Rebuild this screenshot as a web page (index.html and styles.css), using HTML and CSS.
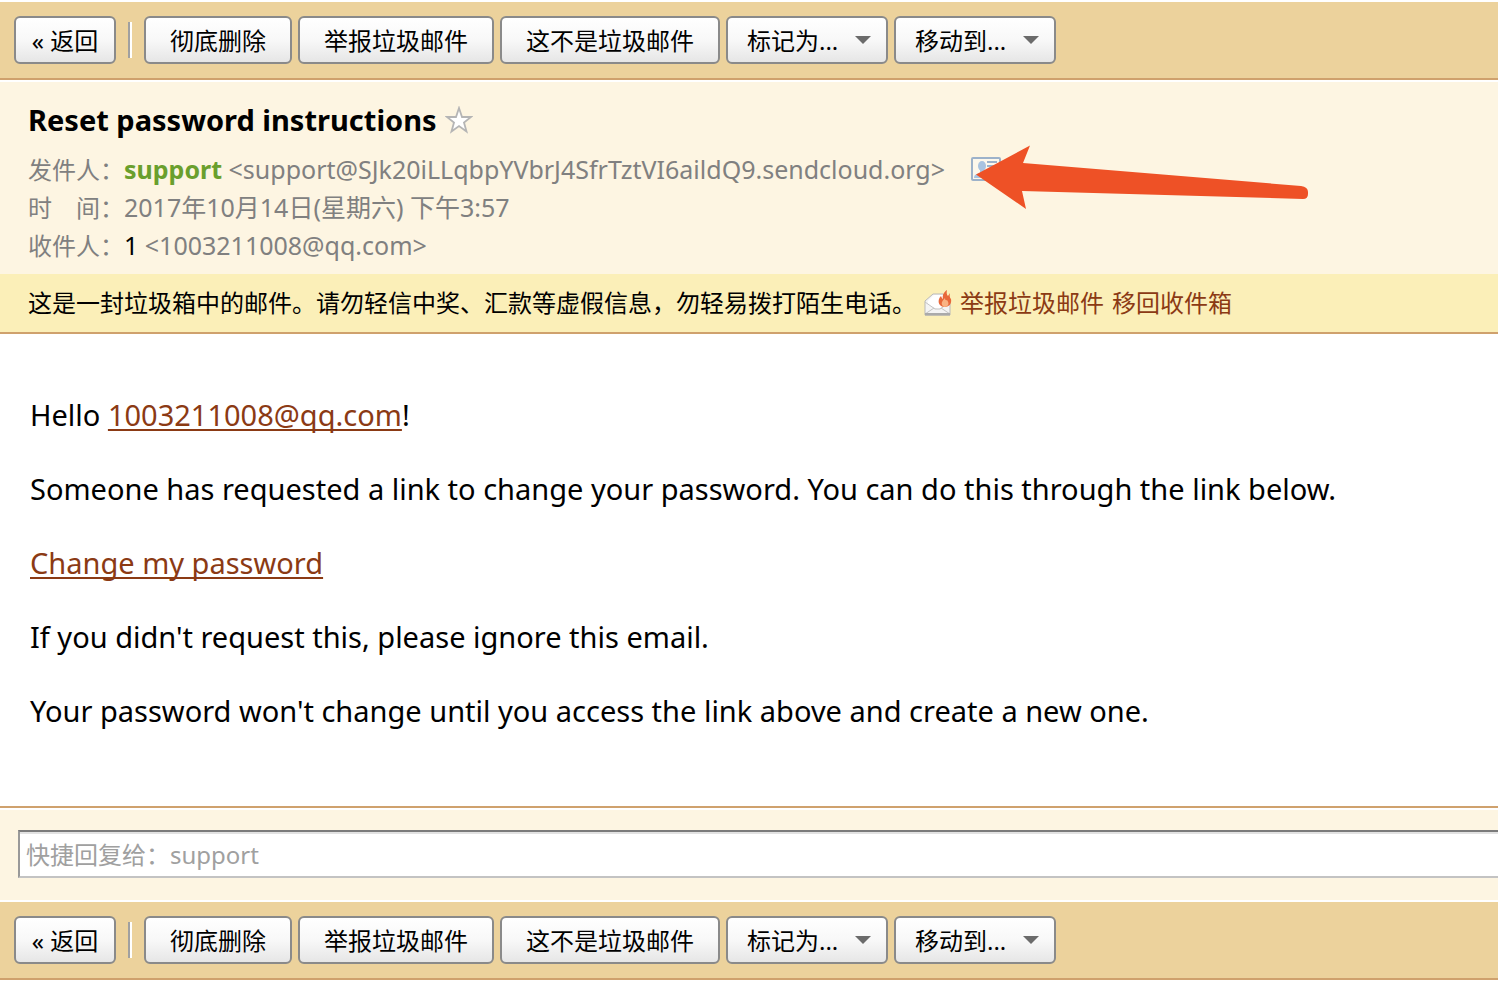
FILE: index.html
```html
<!DOCTYPE html>
<html lang="zh-CN">
<head>
    <meta charset="UTF-8">
    <title>Reset password instructions</title>
    <link rel="stylesheet" href="styles.css">
</head>
<body>
<div class="toolbar">
    <button type="button" class="btn back">« 返回</button>
    <span class="line"></span>
    <button type="button" class="btn">彻底删除</button>
    <button type="button" class="btn">举报垃圾邮件</button>
    <button type="button" class="btn">这不是垃圾邮件</button>
    <span class="drop"><select class="btn" aria-label="标记为"><option>标记为...</option></select></span>
    <span class="drop"><select class="btn" aria-label="移动到"><option>移动到...</option></select></span>
</div>

<div class="mailhead">
    <h1>Reset password instructions
        <svg class="star" viewBox="0 0 28 28"><path d="M14 2L17 11H26L19 16.500 21.500 25.500 14 20 6.500 25.500 9 16.500 2 11H11z" fill="#fff" stroke="#b5b5b5" stroke-width="1.800"/></svg>
    </h1>
    <div class="row">
        <span class="label">发件人：</span><span class="value"><b class="sender">support</b> &lt;support@SJk20iLLqbpYVbrJ4SfrTztVI6aildQ9.sendcloud.org&gt;</span>
        <span class="card">
            <svg class="cardicon" viewBox="0 0 30 24">
                <rect x="1" y="1" width="28" height="22" rx="1" fill="#fdf8ec" stroke="#9db2ca" stroke-width="2"/>
                <ellipse cx="11" cy="9" rx="4" ry="5" fill="#a9c3e0"/>
                <path d="M3 21c0-4 3-4 6-5v-3h4v3c3 1 6 1 6 5z" fill="#a9c3e0"/>
                <path d="M16 5h10M16 9h10M18 13h8" stroke="#9db2ca" stroke-width="2"/>
            </svg>
            <svg class="arrow" viewBox="0 0 340 66"><path d="M5 29.500L59 .5 52 18 330 41Q337 42 337 47V49Q337 54 332 54L51 46 55 64z" fill="#ee5126"/></svg>
        </span>
    </div>
    <div class="row"><span class="label">时&emsp;间：</span><span class="value">2017年10月14日(星期六) 下午3:57</span></div>
    <div class="row"><span class="label">收件人：</span><span class="value"><span class="to">1</span> &lt;1003211008@qq.com&gt;</span></div>
</div>

<div class="tips">
    <span>这是一封垃圾箱中的邮件。请勿轻信中奖、汇款等虚假信息，勿轻易拨打陌生电话。</span>
    <svg class="spam" viewBox="0 0 28 28">
        <path d="M1 12L9 5H19L26 12V26H1z" fill="#f4f4f4" stroke="#b9b9b9"/>
        <path d="M4 12L10 6H19L24 12V16L14 20 4 16z" fill="#fff"/>
        <path d="M1 13L11 20H16L26 13M1 25L10 19M26 25L17 19" fill="none" stroke="#c3c3c3"/>
        <path d="M1 24H26V26.500H1z" fill="#aaa"/>
        <path d="M20 18C14 17 13 11 17 7Q18 10 19 10C18 6 20 3 23 1Q22 5 24 7L26 4Q25 8 27 10C28 15 25 18 20 18z" fill="#e8683a"/>
        <path d="M20 18C16 15 18 12 21 9Q21 12 23 11C26 15 24 18 20 18z" fill="#f9b384"/>
    </svg>
    <a href="#">举报垃圾邮件</a>
    <a href="#">移回收件箱</a>
</div>

<div class="content">
    <p>Hello <a href="mailto:1003211008@qq.com">1003211008@qq.com</a>!</p>
    <p>Someone has requested a link to change your password. You can do this through the link below.</p>
    <p><a href="#">Change my password</a></p>
    <p>If you didn't request this, please ignore this email.</p>
    <p>Your password won't change until you access the link above and create a new one.</p>
</div>

<div class="reply">
    <input type="text" aria-label="快捷回复" placeholder="快捷回复给：support">
</div>

<div class="toolbar">
    <button type="button" class="btn back">« 返回</button>
    <span class="line"></span>
    <button type="button" class="btn">彻底删除</button>
    <button type="button" class="btn">举报垃圾邮件</button>
    <button type="button" class="btn">这不是垃圾邮件</button>
    <span class="drop"><select class="btn" aria-label="标记为"><option>标记为...</option></select></span>
    <span class="drop"><select class="btn" aria-label="移动到"><option>移动到...</option></select></span>
</div>
</body>
</html>
```
FILE: styles.css
```css
*{
    margin: 0;
    padding: 0;
    box-sizing: border-box;
}
body{
    background: #fff;
    color: #000;
    font: 24px/38px "Noto Sans","Noto Sans CJK SC",sans-serif;
    overflow-x: hidden;
}
a{
    color: #8b3a14;
}
/*工具栏*/
.toolbar{
    display: flex;
    align-items: center;
    gap: 6px;
    margin-top: 2px;
    padding: 14px;
    background: #ecd29c;
    border-bottom: 2px solid #cfa16d;
}
.btn{
    height: 48px;
    padding: 2px 24px 0;
    border: 2px solid #8a8a8a;
    border-radius: 6px;
    background: linear-gradient(#fff,#f8f8f8 50%,#e6e6e6);
    color: #000;
    font: 24px/40px "Noto Sans","Noto Sans CJK SC",sans-serif;
    white-space: nowrap;
}
.back{
    width: 102px;
    padding: 2px 0 0;
}
.line{
    width: 4px;
    height: 36px;
    margin: 0 6px;
    border-left: 2px solid #a0a0a0;
    background: #fff;
}
.drop{
    position: relative;
}
.drop .btn{
    display: block;
    width: 162px;
    padding: 2px 19px 0;
    appearance: none;
}
.drop::after{
    content: "";
    position: absolute;
    top: 20px;
    right: 17px;
    border: 8px solid transparent;
    border-top-color: #6b6b6b;
    border-bottom: 0;
    pointer-events: none;
}
/*邮件头*/
.mailhead{
    margin-top: 2px;
    padding: 18px 28px 10px;
    background: #fdf5e2;
    color: #808080;
}
.mailhead h1{
    display: flex;
    align-items: center;
    gap: 8px;
    margin-bottom: 10px;
    color: #000;
    font-size: 29px;
    line-height: 40px;
}
.star{
    width: 28px;
    height: 28px;
}
.row{
    height: 38px;
    white-space: nowrap;
}
.value{
    font-size: 25px;
}
.sender{
    color: #6a9f2d;
}
.to{
    color: #000;
}
.card{
    display: inline-block;
    position: relative;
    width: 30px;
    height: 24px;
    margin-left: 20px;
    vertical-align: -2px;
}
.cardicon{
    display: block;
    width: 30px;
    height: 24px;
}
.arrow{
    position: absolute;
    top: -12px;
    left: 0;
    width: 340px;
    height: 66px;
}
/*垃圾邮件提示*/
.tips{
    display: flex;
    align-items: center;
    gap: 8px;
    padding: 10px 28px;
    background: #fbefb8;
    border-bottom: 2px solid #cfa16d;
}
.tips a{
    text-decoration: none;
}
.spam{
    width: 28px;
    height: 28px;
}
/*正文*/
.content{
    padding: 64px 30px 38px;
    border-bottom: 2px solid #cfa16d;
    font-size: 29px;
    line-height: 34px;
}
.content p{
    margin-bottom: 40px;
}
.content a{
    text-decoration-thickness: 2px;
    text-underline-offset: 3px;
    text-decoration-skip-ink: none;
}
/*快捷回复*/
.reply{
    margin-top: 2px;
    padding: 20px 0 22px 18px;
    background: #fdf5e2;
}
.reply input{
    display: block;
    width: 100%;
    height: 48px;
    padding: 0 6px;
    border: 2px solid #999;
    border-top-color: #7b7b7b;
    border-right: 0;
    border-bottom-color: #c3c3c3;
    background: #fff;
    box-shadow: inset 0 2px 0 #e2e2e2;
    font: 24px "Noto Sans","Noto Sans CJK SC",sans-serif;
}
.reply input::placeholder{
    color: #a0a0a0;
}
```
